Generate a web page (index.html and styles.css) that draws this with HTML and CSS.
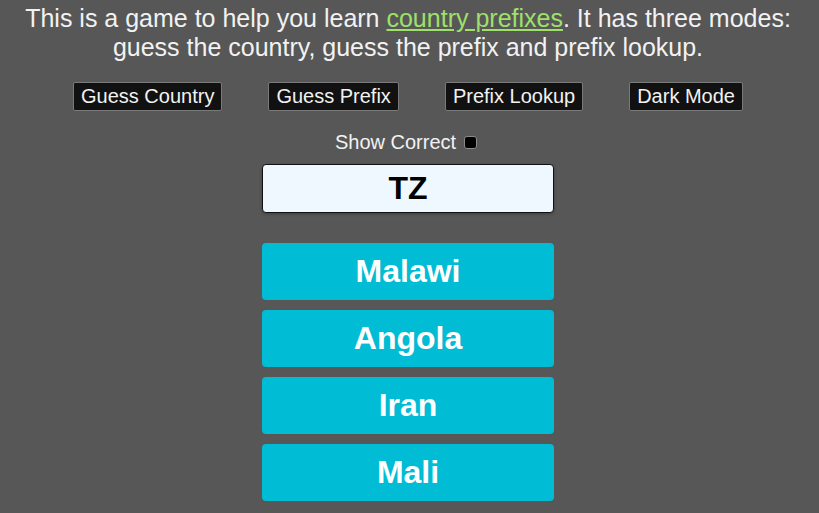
FILE: index.html
```html
<!DOCTYPE html>
<html lang="en">
<head>
<meta charset="utf-8">
<title>Country Prefixes</title>
<link rel="stylesheet" href="styles.css">
</head>
<body>
<main class="page">
  <p class="intro">This is a game to help you learn <a class="intro-link" href="#">country prefixes</a>. It has three modes: guess the country, guess the prefix and prefix lookup.</p>
  <nav class="modes">
    <button class="mode-btn">Guess Country</button>
    <button class="mode-btn">Guess Prefix</button>
    <button class="mode-btn">Prefix Lookup</button>
    <button class="mode-btn">Dark Mode</button>
  </nav>
  <label class="show-correct">Show Correct <input class="check" type="checkbox"></label>
  <div class="prefix-box">TZ</div>
  <div class="answers">
    <button class="answer">Malawi</button>
    <button class="answer">Angola</button>
    <button class="answer">Iran</button>
    <button class="answer">Mali</button>
  </div>
</main>
</body>
</html>
```
FILE: styles.css
```css
html, body {
  margin: 0;
  padding: 0;
  background: #575757;
  font-family: "Liberation Sans", Arial, sans-serif;
  color: #f2f2f2;
}
.page {
  padding: 0 3px 0 0;
  display: flex;
  flex-direction: column;
  align-items: center;
}
.intro {
  margin: 4px 16px 0;
  font-size: 25px;
  line-height: 29px;
  text-align: center;
}
.intro-link {
  color: #9ee06a;
}
.modes {
  display: flex;
  gap: 46px;
  margin-top: 20px;
}
.mode-btn {
  font-family: inherit;
  font-size: 20px;
  color: #f2f2f2;
  background: #111;
  border: 1px solid #7a7a7a;
  border-radius: 2px;
  height: 29px;
  padding: 0 7px;
  line-height: 27px;
}
.show-correct {
  margin: 20px 4px 0 0;
  font-size: 20px;
  display: flex;
  align-items: center;
  gap: 8px;
  height: 23px;
}
.check {
  appearance: none;
  -webkit-appearance: none;
  margin: 0;
  width: 13px;
  height: 13px;
  background: #000;
  border: 1px solid #8a8a8a;
  border-radius: 3px;
}
.prefix-box {
  margin-top: 10px;
  box-sizing: border-box;
  width: 292px;
  height: 49px;
  background: #f0f8ff;
  border: 1px solid #111;
  border-radius: 4px;
  color: #000;
  font-weight: bold;
  font-size: 32px;
  display: flex;
  align-items: center;
  justify-content: center;
  box-shadow: 0 1px 3px rgba(0,0,0,0.3);
}
.answers {
  margin-top: 30px;
  display: flex;
  flex-direction: column;
  gap: 10px;
}
.answer {
  width: 292px;
  height: 57px;
  border: none;
  border-radius: 4px;
  background: #00bcd4;
  color: #fff;
  font-family: inherit;
  font-weight: bold;
  font-size: 32px;
  padding: 0;
}
```
